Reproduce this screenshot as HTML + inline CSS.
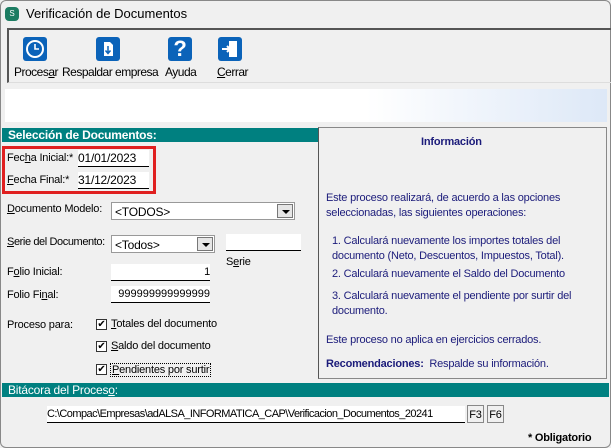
<!DOCTYPE html>
<html><head><style>
body{margin:0;width:611px;height:448px;background:#f0f0f0;font-family:"Liberation Sans",sans-serif;font-size:11px;color:#000;position:relative;overflow:hidden;letter-spacing:-0.2px}
.a{position:absolute;white-space:nowrap}
.frame{position:absolute;left:0;top:0;width:609px;height:446px;border:1px solid #888;border-radius:6px}
.tb{left:7px;top:28px;width:604px;height:55px;border-left:2px solid #555;border-top:2px solid #555;border-bottom:1px solid #ddd;box-sizing:border-box}
.ic{width:24px;height:24px;background:#0b63b9;border-radius:3px;position:absolute;top:37px}
.teal{background:#008080;color:#fff;font-weight:bold;font-size:12px;height:14px;line-height:14px;padding-left:6px}
.inp{background:#fff;border-bottom:1px solid #000;height:16px;line-height:16px}
.combo{background:#fff;border:1px solid #999;height:18px;line-height:18px;font-size:12px;padding-left:3px;box-sizing:border-box}
.btn{position:absolute;right:1px;top:1px;width:16px;height:14px;background:#e6e6e6;border:1px solid #777;box-sizing:border-box}
.btn:after{content:"";position:absolute;left:4px;top:5px;border-left:4px solid transparent;border-right:4px solid transparent;border-top:4px solid #000}
.cb{width:11px;height:11px;border:1px solid #333;background:#fff;font-size:10px;line-height:10px;text-align:center;box-sizing:border-box}
.info{color:#1b1b7a}
.lbl{font-size:12px;letter-spacing:-0.5px}
u{text-decoration:underline}
</style></head><body>
<div class="frame"></div>
<div class="a" style="left:5px;top:7px;width:14px;height:14px;border-radius:4px;background:#1c7c62;color:#fff;font-size:8px;text-align:center;line-height:14px">S</div>
<div class="a" style="left:26px;top:6px;font-size:13px;letter-spacing:0">Verificación de Documentos</div>
<div class="a tb"></div>
<div class="ic" style="left:23px"><svg width="24" height="24"><circle cx="12" cy="12" r="8" fill="none" stroke="#fff" stroke-width="2"/><path d="M12 7V12H16" stroke="#fff" stroke-width="1.6" fill="none"/></svg></div>
<div class="ic" style="left:96px"><svg width="24" height="24"><path d="M8 5H14L17 8V19H8Z" fill="#fff"/><path d="M12 9V16M9.5 13.5L12 16.5L14.5 13.5" stroke="#0b63b9" stroke-width="1.5" fill="none"/></svg></div>
<div class="ic" style="left:168px;font-size:22px;color:#fff;font-weight:bold;text-align:center;line-height:24px">?</div>
<div class="ic" style="left:218px"><svg width="24" height="24"><path d="M11 4H19V20H11Z" fill="#fff"/><path d="M4 12H12M9 9L12 12L9 15" stroke="#fff" stroke-width="2" fill="none"/></svg></div>
<div class="a lbl" style="left:14px;top:65px">Proces<u>a</u>r</div>
<div class="a lbl" style="left:62px;top:65px">Respaldar empresa</div>
<div class="a lbl" style="left:165px;top:65px">Ayuda</div>
<div class="a lbl" style="left:217px;top:65px"><u>C</u>errar</div>
<div class="a" style="left:5px;top:89px;width:602px;height:33px;background:linear-gradient(90deg,#fff 60%,#dde8f7)"></div>
<div class="a teal" style="left:2px;top:128px;width:310px">Selección de Documentos:</div>
<div class="a" style="left:318px;top:127px;width:289px;height:252px;border:1px solid #888;border-left-color:#555;box-sizing:border-box"></div>
<div class="a" style="left:2px;top:146px;width:154px;height:48px;border:3px solid #e02020;box-sizing:border-box"></div>
<div class="a" style="left:7px;top:152px">Fec<u>h</u>a Inicial:*</div>
<div class="a inp" style="left:78px;top:150px;width:71px;font-size:12px">01/01/2023</div>
<div class="a" style="left:7px;top:174px"><u>F</u>echa Final:*</div>
<div class="a inp" style="left:78px;top:172px;width:71px;font-size:12px">31/12/2023</div>
<div class="a" style="left:7px;top:203px"><u>D</u>ocumento Modelo:</div>
<div class="a combo" style="left:111px;top:202px;width:184px">&lt;TODOS&gt;<div class="btn"></div></div>
<div class="a" style="left:7px;top:236px;letter-spacing:-0.4px"><u>S</u>erie del Documento:</div>
<div class="a combo" style="left:111px;top:235px;width:104px">&lt;Todos&gt;<div class="btn"></div></div>
<div class="a inp" style="left:226px;top:234px;width:75px"></div>
<div class="a" style="left:226px;top:256px">S<u>e</u>rie</div>
<div class="a" style="left:7px;top:266px">F<u>o</u>lio Inicial:</div>
<div class="a inp" style="left:111px;top:264px;width:99px;text-align:right;font-size:11px">1</div>
<div class="a" style="left:7px;top:289px">Folio Fi<u>n</u>al:</div>
<div class="a inp" style="left:111px;top:286px;width:99px;text-align:right;font-size:11px;letter-spacing:0">999999999999999</div>
<div class="a" style="left:7px;top:319px">Proceso para:</div>
<div class="a cb" style="left:96px;top:319px">✔</div><div class="a" style="left:111px;top:318px"><u>T</u>otales del documento</div>
<div class="a cb" style="left:96px;top:341px">✔</div><div class="a" style="left:111px;top:340px"><u>S</u>aldo del documento</div>
<div class="a cb" style="left:96px;top:364px">✔</div><div class="a" style="left:110px;top:363px;border:1px dotted #000;padding:0 1px"><u>P</u>endientes por surtir</div>
<div class="a info" style="left:421px;top:136px;font-weight:bold">Información</div>
<div class="a info" style="left:326px;top:191px;line-height:15px">Este proceso realizará, de acuerdo a las opciones<br>seleccionadas, las siguientes operaciones:</div>
<div class="a info" style="left:332px;top:234px;line-height:15px">1. Calculará nuevamente los importes totales del<br>documento (Neto, Descuentos, Impuestos, Total).</div>
<div class="a info" style="left:332px;top:268px">2. Calculará nuevamente el Saldo del Documento</div>
<div class="a info" style="left:332px;top:289px;line-height:15px">3. Calculará nuevamente el pendiente por surtir del<br>documento.</div>
<div class="a info" style="left:326px;top:334px">Este proceso no aplica en ejercicios cerrados.</div>
<div class="a info" style="left:326px;top:358px"><b>Recomendaciones:</b>&nbsp; Respalde su información.</div>
<div class="a teal" style="left:2px;top:383px;width:601px;font-weight:normal">Bitácora del Proces<u>o</u>:</div>
<div class="a inp" style="left:47px;top:406px;width:418px;font-size:11px;letter-spacing:-0.55px;overflow:hidden">C:\Compac\Empresas\adALSA_INFORMATICA_CAP\Verificacion_Documentos_20241</div>
<div class="a" style="left:467px;top:405px;width:17px;height:18px;border:1px solid #888;background:#f0f0f0;line-height:18px;text-align:center;box-sizing:border-box">F3</div>
<div class="a" style="left:487px;top:405px;width:17px;height:18px;border:1px solid #888;background:#f0f0f0;line-height:18px;text-align:center;box-sizing:border-box">F6</div>
<div class="a" style="left:528px;top:432px;font-weight:bold">* Obligatorio</div>
</body></html>
